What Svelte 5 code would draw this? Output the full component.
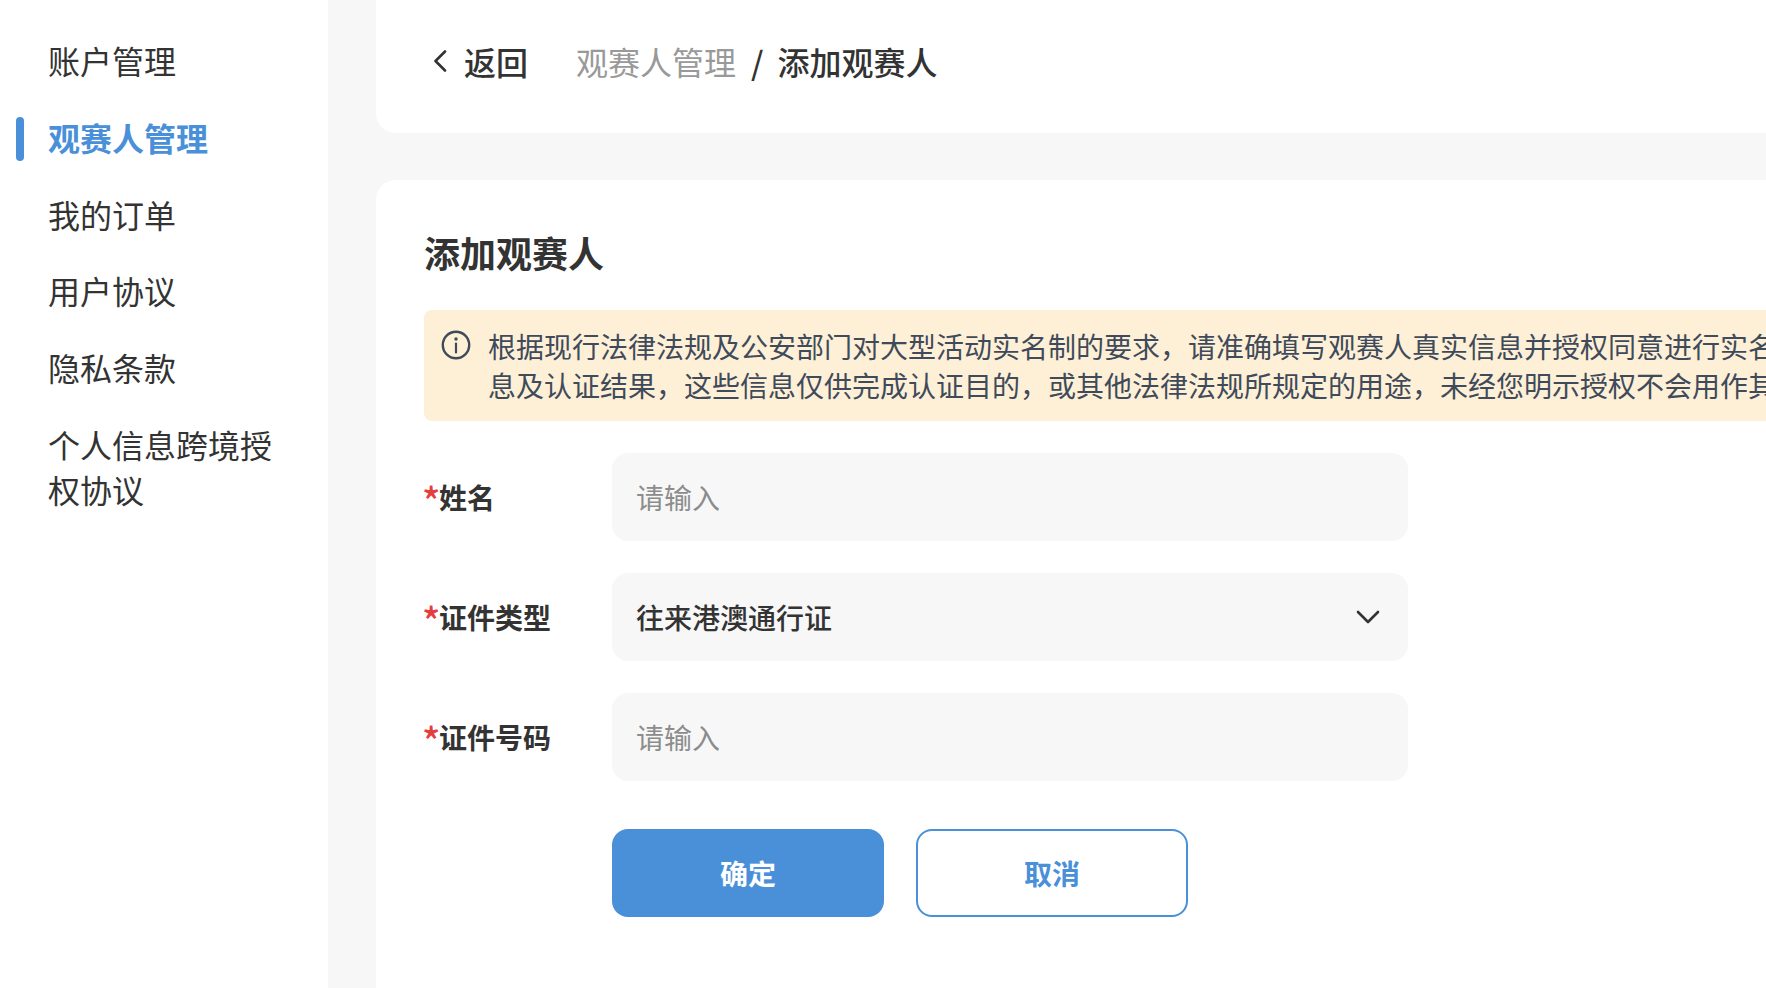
<script>
  const menu = ['账户管理', '观赛人管理', '我的订单', '用户协议', '隐私条款', '个人信息跨境授权协议']
  let active = 1
</script>

<div class="layout">
  <aside class="sidebar">
    {#each menu as item, i}
      <div class="menu-item" class:active={i === active}>{item}</div>
    {/each}
  </aside>

  <main class="content">
    <div class="card crumb-bar">
      <span class="back">
        <svg width="14" height="22" viewBox="0 0 14 22" fill="none">
          <path d="M12 1.5 2.5 11 12 20.5" stroke="#333" stroke-width="2.6" stroke-linecap="round" stroke-linejoin="round" />
        </svg>
        返回
      </span>
      <span class="crumb">观赛人管理</span>
      <span class="sep">/</span>
      <span class="crumb-current">添加观赛人</span>
    </div>

    <div class="card form-card">
      <h1>添加观赛人</h1>

      <div class="notice">
        <svg class="notice-icon" width="30" height="30" viewBox="0 0 30 30" fill="none">
          <circle cx="15" cy="15" r="13.2" stroke="#3f4a5a" stroke-width="2.4" />
          <circle cx="15" cy="9" r="1.7" fill="#3f4a5a" />
          <path d="M15 13.5v9" stroke="#3f4a5a" stroke-width="2.2" stroke-linecap="round" />
        </svg>
        <p>
          根据现行法律法规及公安部门对大型活动实名制的要求，请准确填写观赛人真实信息并授权同意进行实名认证<br />
          息及认证结果，这些信息仅供完成认证目的，或其他法律法规所规定的用途，未经您明示授权不会用作其他用途
        </p>
      </div>

      <div class="form">
        <div class="row">
          <span class="label"><i>*</i>姓名</span>
          <div class="field placeholder">请输入</div>
        </div>
        <div class="row">
          <span class="label"><i>*</i>证件类型</span>
          <div class="field value">
            往来港澳通行证
            <svg width="24" height="14" viewBox="0 0 24 14" fill="none">
              <path d="M2 2l10 10L22 2" stroke="#333" stroke-width="2.6" stroke-linecap="round" stroke-linejoin="round" />
            </svg>
          </div>
        </div>
        <div class="row">
          <span class="label"><i>*</i>证件号码</span>
          <div class="field placeholder">请输入</div>
        </div>
        <div class="actions">
          <button class="btn primary">确定</button>
          <button class="btn outline">取消</button>
        </div>
      </div>
    </div>
  </main>
</div>

<style>
  :global(body) {
    margin: 0;
    background: #f7f7f7;
    overflow: hidden;
  }

  .layout {
    display: flex;
    height: 988px;
    overflow: hidden;
    font-family: "Noto Sans CJK SC", "Liberation Sans", sans-serif;
    color: #333;
  }

  .sidebar {
    flex: none;
    box-sizing: border-box;
    width: 328px;
    margin-top: -8px;
    padding: 46px 40px 0 48px;
    background: #fff;
    border-radius: 12px 12px 0 0;
    display: flex;
    flex-direction: column;
    gap: 32px;
  }

  .menu-item {
    position: relative;
    font-size: 32px;
    line-height: 44.8px;
  }

  .menu-item.active {
    color: #4a90d9;
    font-weight: 600;
  }

  .menu-item.active::before {
    content: '';
    position: absolute;
    left: -32px;
    top: 2px;
    width: 8px;
    height: 44px;
    border-radius: 4px;
    background: #4a90d9;
  }

  .content {
    flex: none;
    width: 1700px;
    margin-left: 48px;
    margin-top: -20px;
    display: flex;
    flex-direction: column;
    gap: 47px;
  }

  .card {
    flex: none;
    background: #fff;
    border-radius: 20px;
  }

  .crumb-bar {
    display: flex;
    align-items: center;
    box-sizing: border-box;
    height: 153px;
    padding: 10px 0 0 57px;
    font-size: 32px;
    line-height: 44.8px;
  }

  .back {
    display: flex;
    align-items: center;
    gap: 17px;
    font-weight: 500;
    margin-right: 48px;
  }

  .crumb {
    color: #999;
  }

  .sep {
    margin: 0 14px 0 15px;
    font-weight: 500;
  }

  .crumb-current {
    font-weight: 500;
  }

  .form-card {
    height: 1000px;
    padding: 47px 48px 48px;
  }

  h1 {
    margin: 0 0 33px;
    font-size: 36px;
    line-height: 50.4px;
    font-weight: 600;
  }

  .notice {
    display: flex;
    gap: 17px;
    padding: 16px 16px 16px 17px;
    border-radius: 8px;
    background: #fdf0d6;
    color: #3f4a5a;
    font-size: 28px;
    line-height: 39.2px;
    white-space: nowrap;
  }

  .notice-icon {
    flex: none;
    margin-top: 4px;
  }

  .notice p {
    margin: 0;
    padding-top: 0.5px;
    height: 78.5px;
  }

  .form {
    margin-top: 32px;
    display: flex;
    flex-direction: column;
    gap: 32px;
  }

  .row {
    display: flex;
    align-items: center;
  }

  .label {
    flex: none;
    width: 188px;
    padding-top: 1px;
    font-size: 28px;
    font-weight: 600;
    line-height: 39.2px;
  }

  .label i {
    margin-left: -2px;
    font-style: normal;
    font-weight: 500;
    font-size: 38px;
    line-height: 0;
    letter-spacing: -1.5px;
    vertical-align: -7px;
    color: #e53e3e;
  }

  .field {
    box-sizing: border-box;
    width: 796px;
    height: 88px;
    padding: 0 24px;
    display: flex;
    align-items: center;
    justify-content: space-between;
    background: #f7f7f7;
    border-radius: 16px;
    font-size: 28px;
  }

  .placeholder {
    color: #8c8c8c;
    padding-bottom: 1px;
  }

  .value {
    font-weight: 500;
    color: #333;
    padding-right: 28px;
  }

  .actions {
    display: flex;
    gap: 32px;
    margin: 16px 0 0 188px;
  }

  .btn {
    box-sizing: border-box;
    width: 272px;
    height: 88px;
    border-radius: 16px;
    font-family: inherit;
    font-size: 28px;
    font-weight: 700;
    cursor: pointer;
  }

  .primary {
    background: #4a90d9;
    border: none;
    color: #fff;
  }

  .outline {
    background: #fff;
    border: 2px solid #4a90d9;
    color: #4a90d9;
  }
</style>
